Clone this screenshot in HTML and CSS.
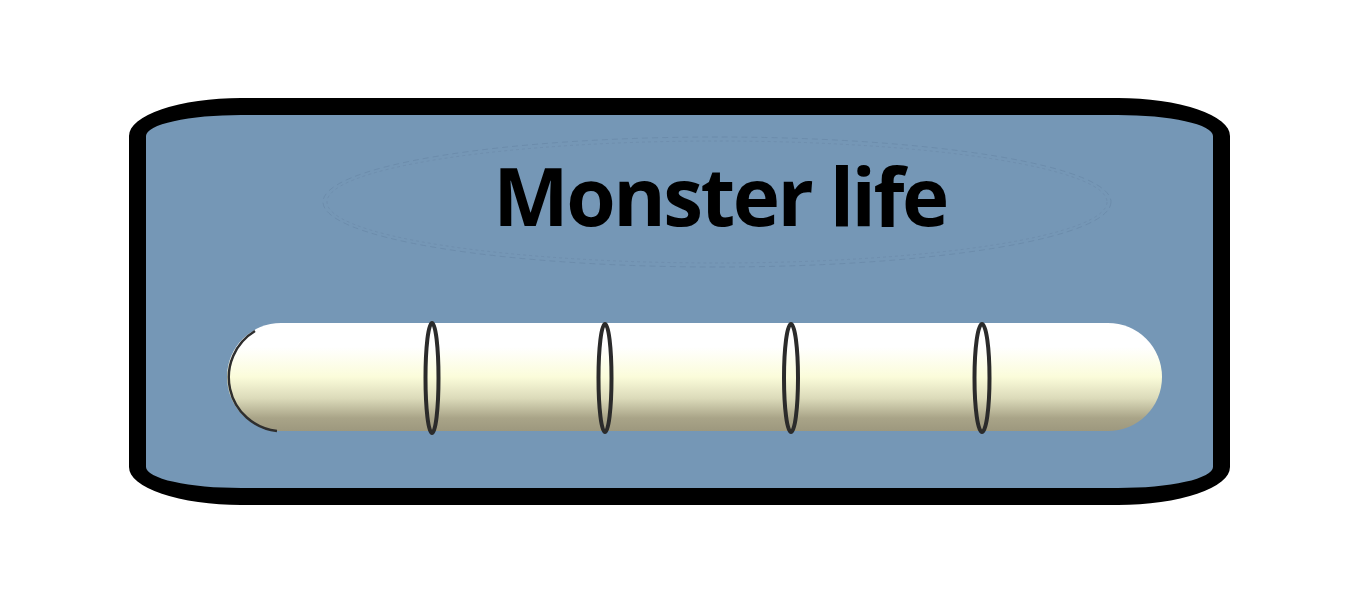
FILE: index.html
```html
<!DOCTYPE html>
<html lang="en">
<head>
    <meta charset="UTF-8">
    <meta name="viewport" content="width=device-width, initial-scale=1.0">
    <title>Monster life</title>
    <link rel="stylesheet" href="styles.css">
</head>
<body>
    <div class="stage">
        <!-- Monster life panel -->
        <div class="panel">
            <div class="title-wrap">
                <svg class="title-glow" width="800" height="134" viewBox="0 0 800 134">
                    <ellipse cx="400" cy="66" rx="394" ry="65" fill="none" stroke="#6887a6" stroke-width="1" stroke-dasharray="6 4" opacity="0.7"/>
                    <ellipse cx="400" cy="66" rx="390" ry="61" fill="none" stroke="#6a89a8" stroke-width="1" stroke-dasharray="3 3" opacity="0.6"/>
                </svg>
                <h1 class="title">Monster life</h1>
            </div>

            <!-- Life bar with segment rings -->
            <svg class="life-bar" width="935" height="117" viewBox="0 0 935 117">
                <defs>
                    <linearGradient id="barFill" x1="0" y1="0" x2="0" y2="1">
                        <stop offset="0" stop-color="#ffffff"/>
                        <stop offset="0.22" stop-color="#ffffff"/>
                        <stop offset="0.5" stop-color="#fbfcda"/>
                        <stop offset="0.7" stop-color="#dbdab9"/>
                        <stop offset="0.88" stop-color="#a9a488"/>
                        <stop offset="1" stop-color="#9d987e"/>
                    </linearGradient>
                </defs>
                <rect x="0" y="4" width="935" height="108" rx="54" fill="url(#barFill)"/>
                <path d="M 28 12 A 54 54 0 0 0 50 112" fill="none" stroke="#2e2e2e" stroke-width="2.5"/>
                <g fill="none" stroke="#2b2b2b" stroke-width="4">
                    <ellipse cx="205" cy="59" rx="6.5" ry="55"/>
                    <ellipse cx="378" cy="59" rx="6.5" ry="54"/>
                    <ellipse cx="564" cy="59" rx="7" ry="54"/>
                    <ellipse cx="755" cy="59" rx="7.5" ry="54"/>
                </g>
            </svg>
        </div>
    </div>
</body>
</html>
```

FILE: styles.css
```css
/* Basic reset */
* {
    margin: 0;
    padding: 0;
    box-sizing: border-box;
}

body {
    background-color: #fff;
    font-family: "Open Sans", "Noto Sans", sans-serif;
}

/* Page area holding the panel */
.stage {
    display: flex;
    padding: 98px 0 0 129px;
    height: 616px;
}

/* Panel with the barrel-shaped outline */
.panel {
    display: flex;
    flex-direction: column;
    width: 1101px;
    height: 407px;
    background-color: #7597b6;
    border: 17px solid #000;
    border-radius: 112px / 38px;
}

/* Title with the faint oval behind */
.title-wrap {
    position: relative;
    display: flex;
    align-items: center;
    justify-content: center;
    width: 800px;
    height: 134px;
    margin: 21px 0 0 171px;
    padding-left: 6px;
}

.title-glow {
    position: absolute;
    left: 0;
    top: 0;
}

.title {
    position: relative;
    font-size: 80px;
    font-weight: 700;
    letter-spacing: -2.5px;
    line-height: 1;
    color: #000;
    margin-top: -16px;
}

/* Life bar */
.life-bar {
    display: block;
    margin: 49px 0 0 81px;
}
```
